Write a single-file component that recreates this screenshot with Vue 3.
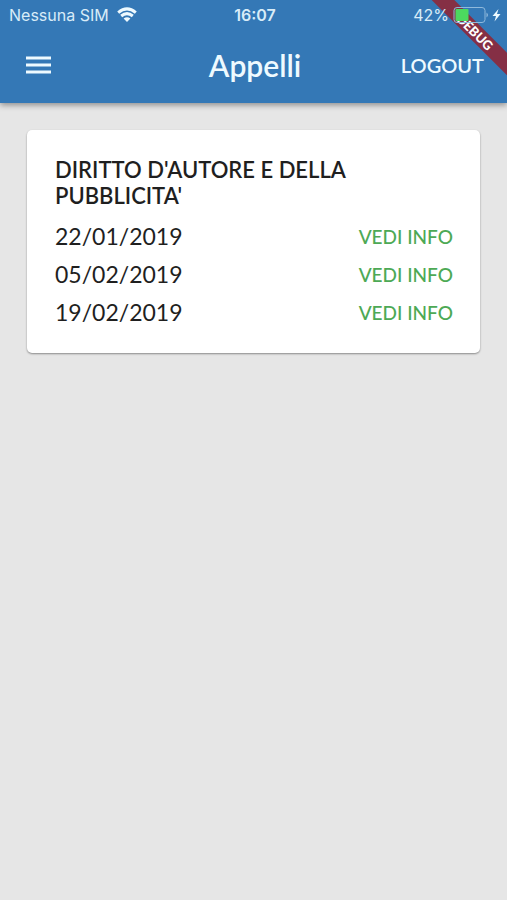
<script setup>
import { ref } from 'vue';

const exams = ref([
  {
    name: "DIRITTO D'AUTORE E DELLA PUBBLICITA'",
    dates: ['22/01/2019', '05/02/2019', '19/02/2019']
  }
]);
</script>

<template>
  <div class="app">
    <header class="header">
      <div class="status-bar">
        <div class="carrier">
          <span>Nessuna SIM</span>
          <svg class="wifi" width="20" height="16" viewBox="0 0 20 16">
            <path d="M1.2 5.6Q10 -1.8 18.8 5.6M4.2 9Q10 4.2 15.8 9" />
            <path class="fill" d="M6.6 11.4Q10 8.9 13.4 11.4L10 15Z" />
          </svg>
        </div>
        <span class="time">16:07</span>
        <div class="power">
          <span>42%</span>
          <svg width="48" height="18" viewBox="0 0 48 18">
            <rect class="case" x="1" y="1.5" width="31" height="15" rx="3" />
            <rect class="level" x="2.5" y="3" width="13" height="12" rx="1" />
            <path class="tip" d="M33.5 6.5Q36.5 9 33.5 11.5Z" />
            <path class="bolt" d="M45.5 3L39.5 10H43L41.5 15.5L47.5 8H44Z" />
          </svg>
        </div>
      </div>

      <nav class="toolbar">
        <button class="menu" aria-label="Menu">
          <svg width="25" height="18" viewBox="0 0 25 18">
            <path d="M0 2H25M0 9H25M0 16H25" />
          </svg>
        </button>
        <h1>Appelli</h1>
        <button class="logout">LOGOUT</button>
      </nav>

      <!-- debug ribbon over the corner -->
      <div class="ribbon">
        <span>DEBUG</span>
      </div>
    </header>

    <main>
      <section v-for="exam in exams" :key="exam.name" class="card">
        <h2>{{ exam.name }}</h2>
        <ul>
          <li v-for="date in exam.dates" :key="date">
            <span>{{ date }}</span>
            <button class="info">VEDI INFO</button>
          </li>
        </ul>
      </section>
    </main>
  </div>
</template>

<style>
body {
  background-color: #e6e6e6;
}
</style>

<style scoped>
.app {
  min-height: 100vh;
  background-color: #e6e6e6;
  color: #1f1f1f;
  font-family: Lato, sans-serif;
}

button {
  padding: 0;
  border: none;
  background: none;
  font-family: inherit;
  cursor: pointer;
}

.header {
  position: relative;
  background-color: #3478b6;
  color: #eefaff;
  box-shadow: 0 2px 6px rgba(0, 0, 0, 0.4);
}

.status-bar {
  position: relative;
  z-index: 2;
  display: grid;
  grid-template-columns: 1fr auto 1fr;
  align-items: center;
  height: 30px;
  padding: 0 6px 0 9px;
  font-family: Inter, sans-serif;
  font-size: 16px;
  color: #d8ecf8;
}

.carrier, .power {
  display: flex;
  align-items: center;
  gap: 8px;
}

.power {
  justify-content: flex-end;
  gap: 4px;
}

.time {
  font-weight: 600;
}

.wifi path {
  fill: none;
  stroke: #eefaff;
  stroke-width: 3;
}

.wifi .fill {
  fill: #eefaff;
  stroke: none;
}

.case {
  fill: none;
  stroke: #8fb9dc;
}

.level {
  fill: #4cd95f;
}

.tip {
  fill: #8fb9dc;
}

.bolt {
  fill: #eefaff;
}

.toolbar {
  display: grid;
  grid-template-columns: 1fr auto 1fr;
  align-items: center;
  height: 69px;
  padding: 0 23px 4px 26px;
}

.menu {
  display: flex;
  justify-self: start;
}

.menu path {
  stroke: #eefaff;
  stroke-width: 3;
}

h1 {
  margin: 0;
  font-size: 30px;
  font-weight: 600;
  line-height: 36px;
}

.logout {
  justify-self: end;
  color: #eefaff;
  font-size: 20px;
  font-weight: 600;
}

.ribbon {
  position: absolute;
  top: 0;
  right: 0;
  width: 80px;
  height: 80px;
  overflow: hidden;
  pointer-events: none;
}

.ribbon span {
  position: absolute;
  top: 24px;
  left: -12px;
  width: 120px;
  transform: rotate(45deg);
  background-color: #852f45;
  color: #fff;
  font-size: 13px;
  font-weight: 900;
  line-height: 16px;
  text-align: center;
}

main {
  padding: 27px;
}

.card {
  padding: 27px 27px 27px 28px;
  border-radius: 5px;
  background-color: #fff;
  box-shadow: 0 1px 2px rgba(0, 0, 0, 0.4);
}

h2 {
  margin: 0 0 13px;
  font-size: 22px;
  font-weight: 600;
  line-height: 26px;
}

ul {
  display: grid;
  gap: 10px;
  margin: 0;
  padding: 0;
  list-style: none;
}

li {
  display: flex;
  align-items: center;
  justify-content: space-between;
  font-size: 23px;
  line-height: 28px;
}

.info {
  color: #4da955;
  font-size: 19px;
  font-weight: 500;
}
</style>
